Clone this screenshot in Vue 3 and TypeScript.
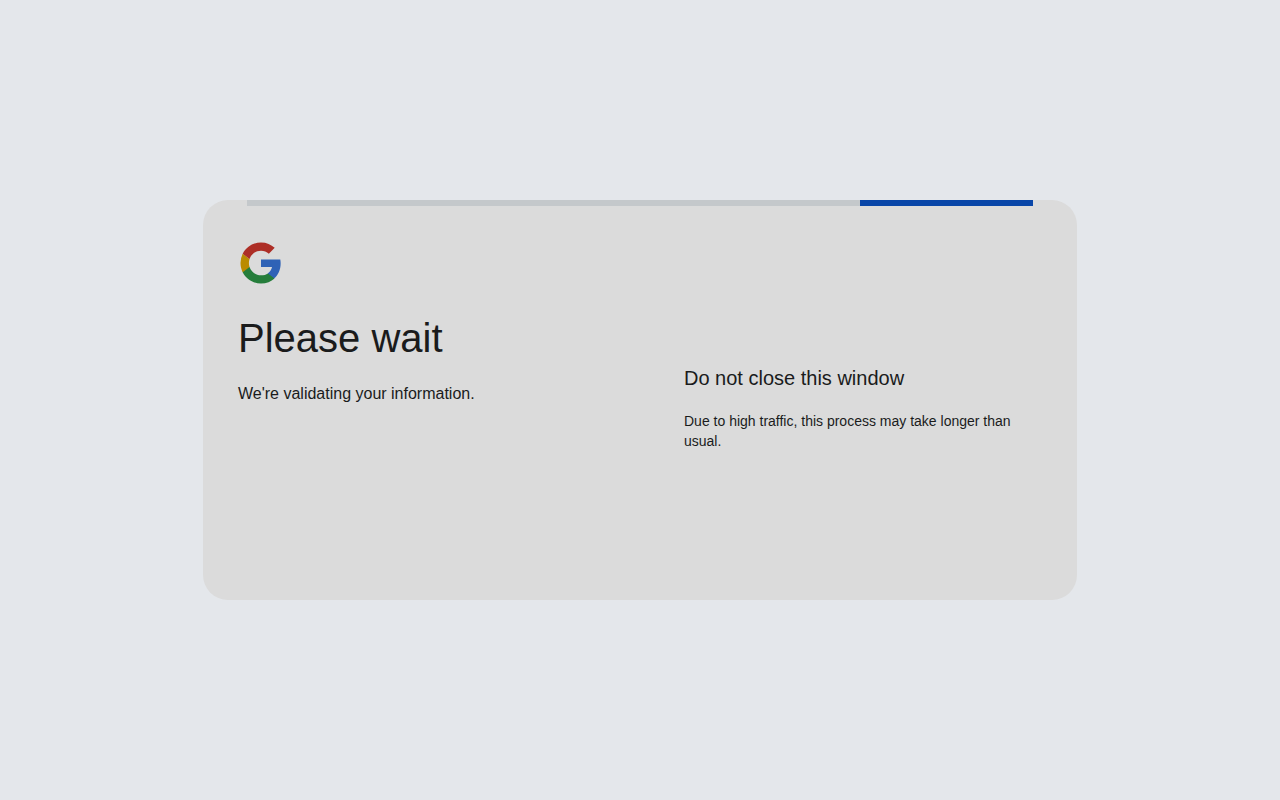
<script setup lang="ts">
const progress = {
  label: 'Validating your information',
}
</script>

<template>
  <main class="page">
    <section class="card">
      <div class="progress" role="progressbar" :aria-label="progress.label">
        <div class="progress-bar"></div>
      </div>
      <div class="columns">
        <div class="intro">
          <svg class="logo" viewBox="0 0 48 48" role="img" aria-label="Google">
            <path fill="#2f62b6" d="M44.5 24.5c0-1.48-.13-2.9-.38-4.26H24v8.06h11.5c-.5 2.67-2 4.93-4.26 6.45v5.23h6.73c3.93-3.62 6.53-8.96 6.53-15.48z" />
            <path fill="#257d3b" d="M24 45.4c5.77 0 10.61-1.9 14.14-5.18l-6.9-5.36c-1.91 1.28-4.36 2.04-7.24 2.04-5.57 0-10.28-3.76-11.96-8.81H4.9v5.54C8.41 40.6 15.65 45.4 24 45.4z" />
            <path fill="#ba8b00" d="M12.04 28.06c-.43-1.28-.67-2.65-.67-4.06s.24-2.78.67-4.06L4.9 14.4A21.3 21.3 0 0 0 2.6 24c0 3.45.83 6.71 2.3 9.6z" />
            <path fill="#ad2e26" d="M24 11.13c3.14 0 5.95 1.08 8.17 3.19l6.13-6.13C34.6 4.75 29.76 2.6 24 2.6c-8.35 0-15.59 4.8-19.1 11.8l7.14 5.54c1.68-5.05 6.39-8.81 11.96-8.81z" />
          </svg>
          <h1>Please wait</h1>
          <p>We're validating your information.</p>
        </div>
        <div class="notice">
          <h2>Do not close this window</h2>
          <p>Due to high traffic, this process may take longer than usual.</p>
        </div>
      </div>
    </section>
  </main>
</template>

<style>
body {
  margin: 0;
  background: #e4e7eb;
}
</style>

<style scoped>
.page {
  min-height: 100vh;
  display: flex;
  align-items: center;
  justify-content: center;
  box-sizing: border-box;
  padding: 24px;
  font-family: "Liberation Sans", Arial, sans-serif;
  color: #1a1b1c;
}

.card {
  width: 100%;
  max-width: 874px;
  min-height: 400px;
  box-sizing: border-box;
  border-radius: 25px;
  background: #dbdbdb;
}

.progress {
  height: 6px;
  margin: 0 44px;
  background: #c4c8cb;
}

.progress-bar {
  width: 22%;
  height: 100%;
  margin-left: auto;
  background: #0946a8;
}

.columns {
  display: grid;
  grid-template-columns: 1fr 1fr;
  gap: 16px;
  padding: 34px 35px 36px;
}

.logo {
  display: block;
  width: 46px;
  height: 46px;
}

h1,
h2,
p {
  margin: 0;
  font-weight: 400;
}

h1 {
  margin-top: 26px;
  font-size: 40px;
  line-height: 52px;
}

.intro p {
  margin-top: 18px;
  font-size: 16px;
  line-height: 24px;
}

.notice {
  padding: 124px 0 0 36px;
}

h2 {
  font-size: 20px;
  line-height: 28px;
}

.notice p {
  margin-top: 19px;
  font-size: 14px;
  line-height: 20px;
}
</style>
